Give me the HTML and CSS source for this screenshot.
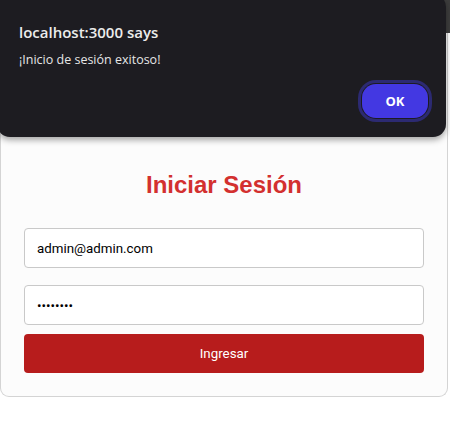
FILE: index.html
```html
<!DOCTYPE html>
<html lang="es">
<head>
<meta charset="utf-8">
<title>Iniciar Sesión</title>
<link rel="stylesheet" href="styles.css">
</head>
<body>
<header class="navbar"></header>
<main class="page">
  <form class="card">
    <h2 class="card-title">Iniciar Sesión</h2>
    <input class="field" type="email" value="admin@admin.com">
    <input class="field field-pass" type="password" value="12345678">
    <button class="submit" type="button">Ingresar</button>
  </form>
</main>
<div class="dialog" role="alertdialog">
  <div class="dialog-title">localhost:3000 says</div>
  <div class="dialog-msg">¡Inicio de sesión exitoso!</div>
  <div class="dialog-actions">
    <button class="dialog-ok" type="button">OK</button>
  </div>
</div>
</body>
</html>
```
FILE: styles.css
```css
html, body {
  margin: 0;
  padding: 0;
  background: #ffffff;
}
body {
  font-family: "Liberation Sans", Arial, sans-serif;
  width: 450px;
  height: 439px;
  overflow: hidden;
}
.navbar {
  height: 33px;
  background: #3d3d3d;
}
.page {
  display: block;
}
.card {
  box-sizing: border-box;
  width: 448px;
  background: #fcfcfc;
  border: 1px solid #d4d4d4;
  border-top: none;
  border-radius: 0 0 9px 9px;
  padding: 138px 23px 23px 23px;
  display: flex;
  flex-direction: column;
}
.card-title {
  margin: 0;
  text-align: center;
  font-family: "Liberation Sans", Arial, sans-serif;
  font-weight: bold;
  font-size: 24px;
  line-height: 28px;
  color: #d3302f;
}
.field {
  box-sizing: border-box;
  height: 40px;
  width: 100%;
  margin: 29px 0 0 0;
  padding: 0 12px;
  border: 1px solid #c9c9c9;
  border-radius: 4px;
  background: #ffffff;
  font-family: Roboto, "Liberation Sans", sans-serif;
  font-size: 13.33px;
  color: #000000;
  outline: none;
}
.field-pass {
  margin-top: 17px;
  letter-spacing: 0;
}
.submit {
  box-sizing: border-box;
  height: 39px;
  width: 100%;
  margin-top: 9px;
  border: none;
  border-radius: 4px;
  background: #b71c1c;
  color: #ffffff;
  font-family: Roboto, "Liberation Sans", sans-serif;
  font-size: 13.33px;
}
.dialog {
  position: absolute;
  left: -3px;
  top: -6px;
  width: 449px;
  height: 143px;
  box-sizing: border-box;
  background: #1d1c21;
  border-radius: 13px;
  box-shadow: 0 3px 6px rgba(0,0,0,0.35);
  padding: 28px 18px 0 22px;
  font-family: "Open Sans", "Noto Sans", sans-serif;
  display: flex;
  flex-direction: column;
}
.dialog-title {
  font-size: 15px;
  font-weight: 600;
  line-height: 21px;
  color: #ececec;
}
.dialog-msg {
  margin-top: 8px;
  font-size: 12.5px;
  line-height: 18px;
  color: #e6e6e6;
}
.dialog-actions {
  display: flex;
  justify-content: flex-end;
  margin-top: 15px;
}
.dialog-ok {
  width: 66px;
  height: 34px;
  border: none;
  border-radius: 14px;
  background: #4338e2;
  color: #ffffff;
  font-family: "Open Sans", "Noto Sans", sans-serif;
  font-weight: 700;
  font-size: 13px;
  box-shadow: 0 0 0 1px #1d1c21, 0 0 0 4px #2c2a72;
}
```
